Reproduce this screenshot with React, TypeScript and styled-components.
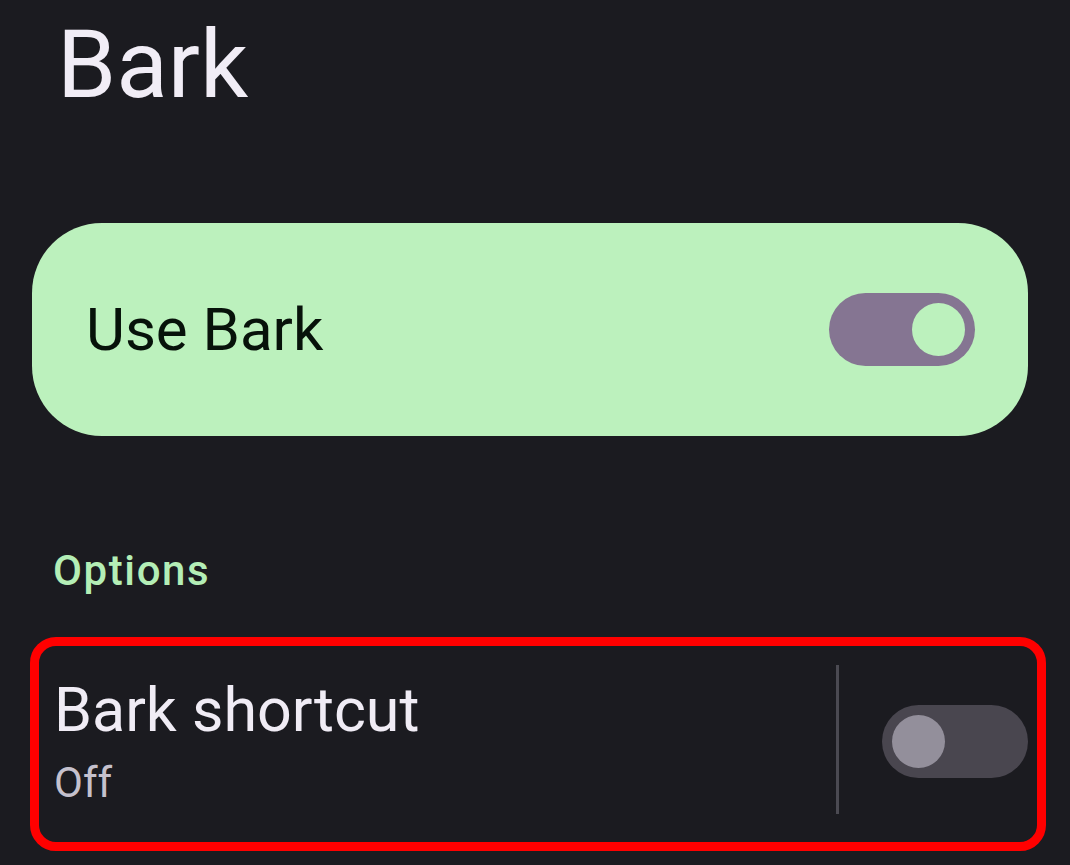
import React from 'react';
import styled, { createGlobalStyle } from 'styled-components';

const GlobalStyle = createGlobalStyle`
  html, body {
    margin: 0;
    padding: 0;
    background: #1b1b20;
  }

  body {
    font-family: Roboto, 'Noto Sans', 'Liberation Sans', sans-serif;
    -webkit-font-smoothing: antialiased;
  }
`;

interface SwitchProps {
  on?: boolean;
}

export default function App() {
  return (
    <>
      <GlobalStyle />
      <Page>
        <Title>Bark</Title>
        <MainCard>
          <MainLabel>Use Bark</MainLabel>
          <Switch on>
            <Thumb on />
          </Switch>
        </MainCard>
        <SectionHeader>Options</SectionHeader>
        <OptionRow>
          <OptionText>
            <OptionTitle>Bark shortcut</OptionTitle>
            <OptionSummary>Off</OptionSummary>
          </OptionText>
          <Divider />
          <Switch>
            <Thumb />
          </Switch>
        </OptionRow>
      </Page>
    </>
  );
}

const Page = styled.div`
  display: flex;
  flex-direction: column;
  width: 1070px;
  min-height: 865px;
  padding-top: 17px;
  box-sizing: border-box;
`;

const Title = styled.h1`
  margin: 0 0 0 57px;
  font-size: 95px;
  line-height: 95px;
  font-weight: 400;
  color: #f1edf6;
`;

const MainCard = styled.div`
  display: flex;
  align-items: center;
  justify-content: space-between;
  height: 213px;
  margin: 111px 42px 0 32px;
  padding: 0 53px 0 54px;
  border-radius: 70px;
  background: #bcf1bd;
  box-sizing: border-box;
`;

const MainLabel = styled.span`
  font-size: 60px;
  line-height: 60px;
  color: #07120a;
`;

const Switch = styled.div<SwitchProps>`
  display: flex;
  align-items: center;
  justify-content: ${({ on }) => (on ? 'flex-end' : 'flex-start')};
  flex-shrink: 0;
  width: 146px;
  height: 73px;
  padding: 0 10px;
  border-radius: 37px;
  background: ${({ on }) => (on ? '#857592' : '#49464f')};
  box-sizing: border-box;
`;

const Thumb = styled.div<SwitchProps>`
  width: 53px;
  height: 53px;
  border-radius: 50%;
  background: ${({ on }) => (on ? '#bcf1bd' : '#938f9b')};
`;

const SectionHeader = styled.h2`
  margin: 114px 0 0 53px;
  font-size: 42px;
  line-height: 42px;
  font-weight: 500;
  letter-spacing: 1.6px;
  color: #b4eeb6;
`;

const OptionRow = styled.div`
  display: flex;
  align-items: center;
  height: 214px;
  margin: 45px 24px 0 30px;
  padding: 0 9px 5px 15px;
  border: 9px solid #ff0000;
  border-radius: 26px;
  box-sizing: border-box;
`;

const OptionText = styled.div`
  display: flex;
  flex-direction: column;
  gap: 22px;
  flex: 1;
`;

const OptionTitle = styled.span`
  font-size: 61px;
  line-height: 60px;
  color: #f0ecf5;
`;

const OptionSummary = styled.span`
  font-size: 42px;
  line-height: 42px;
  color: #c5c1cd;
`;

const Divider = styled.div`
  align-self: center;
  width: 3px;
  height: 149px;
  margin-right: 43px;
  margin-top: -5px;
  background: #4b4a52;
`;
